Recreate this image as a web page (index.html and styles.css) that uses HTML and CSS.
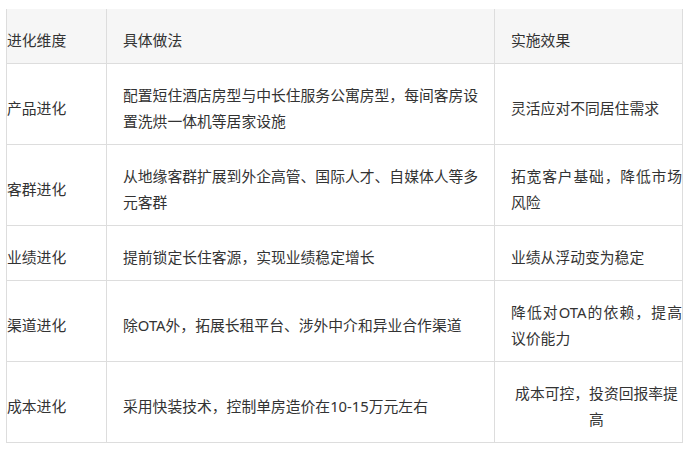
FILE: index.html
```html
<!DOCTYPE html>
<html lang="zh-CN">
<head>
<meta charset="utf-8">
<title>进化维度</title>
<link rel="stylesheet" href="styles.css">
</head>
<body>
<table class="evo">
  <colgroup>
    <col class="c1">
    <col class="c2">
    <col class="c3">
  </colgroup>
  <thead>
    <tr>
      <th class="dim">进化维度</th>
      <th class="how">具体做法</th>
      <th class="eff">实施效果</th>
    </tr>
  </thead>
  <tbody>
    <tr>
      <td class="dim">产品进化</td>
      <td class="how">配置短住酒店房型与中长住服务公寓房型，每间客房设置洗烘一体机等居家设施</td>
      <td class="eff">灵活应对不同居住需求</td>
    </tr>
    <tr>
      <td class="dim">客群进化</td>
      <td class="how">从地缘客群扩展到外企高管、国际人才、自媒体人等多元客群</td>
      <td class="eff">拓宽客户基础，降低市场风险</td>
    </tr>
    <tr>
      <td class="dim">业绩进化</td>
      <td class="how">提前锁定长住客源，实现业绩稳定增长</td>
      <td class="eff">业绩从浮动变为稳定</td>
    </tr>
    <tr>
      <td class="dim">渠道进化</td>
      <td class="how">除OTA外，拓展长租平台、涉外中介和异业合作渠道</td>
      <td class="eff">降低对OTA的依赖，提高议价能力</td>
    </tr>
    <tr>
      <td class="dim">成本进化</td>
      <td class="how">采用快装技术，控制单房造价在10-15万元左右</td>
      <td class="eff center">成本可控，投资回报率提高</td>
    </tr>
  </tbody>
</table>
</body>
</html>
```

FILE: styles.css
```css
html, body {
  margin: 0;
  padding: 0;
  background: #ffffff;
}

body {
  font-family: "Noto Sans", "Noto Sans CJK SC", sans-serif;
  font-size: 14.8px;
  color: #333333;
}

.evo {
  margin: 9px 0 0 6px;
  border-collapse: collapse;
  table-layout: fixed;
  width: 677px;
}

.c1 { width: 100px; }
.c2 { width: 388px; }
.c3 { width: 188px; }

.evo th,
.evo td {
  border: 1px solid #dddddd;
  font-weight: normal;
  text-align: left;
  vertical-align: middle;
  line-height: 26px;
  padding: 18px 0 10px 0;
}

.evo thead th {
  background: #f6f6f6;
  border-top: none;
}

.evo .dim {
  padding-left: 0;
}

.evo .how {
  padding-left: 16px;
  padding-right: 12px;
}

.evo .eff {
  padding-left: 16px;
  padding-right: 0;
  text-align: justify;
}

.evo .eff.center {
  text-align: center;
}
```
